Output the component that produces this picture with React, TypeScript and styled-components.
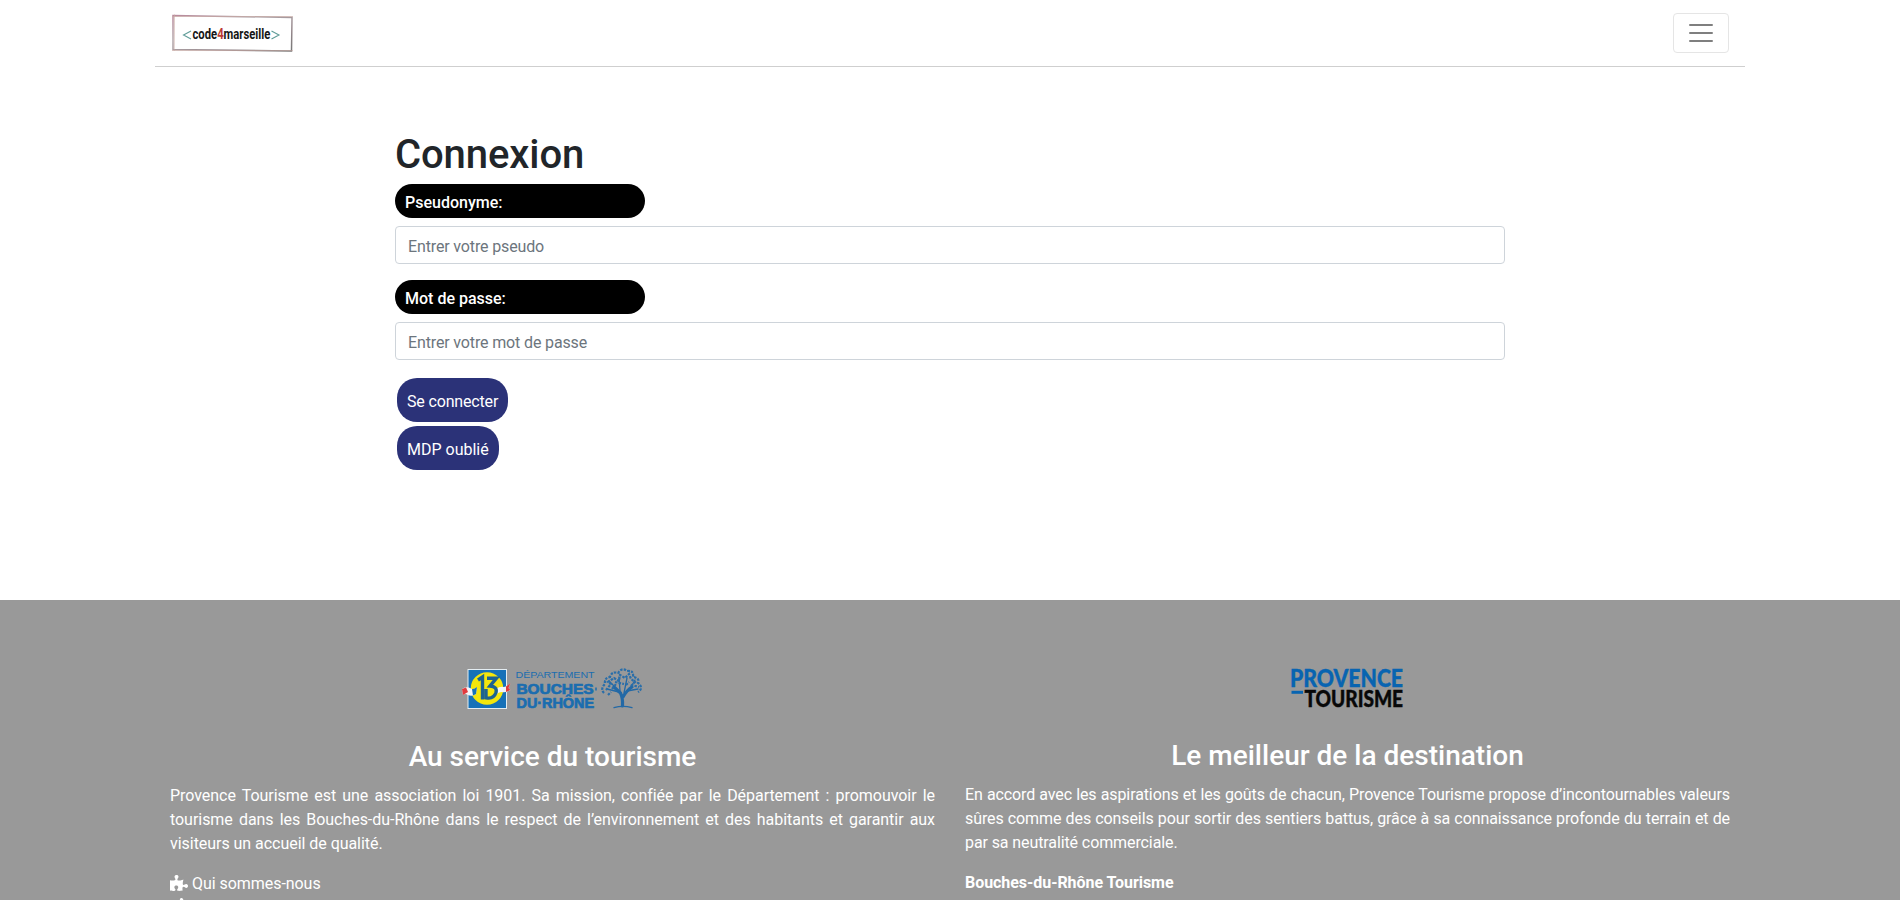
import React from 'react';
import styled, { createGlobalStyle } from 'styled-components';
import { FaPuzzlePiece, FaThumbsUp } from 'react-icons/fa';

const GlobalStyle = createGlobalStyle`
  *, *::before, *::after { box-sizing: border-box; }
  html { overflow: hidden; }
  body {
    margin: 0;
    height: 900px;
    overflow: hidden;
    background: #fff;
    color: #212529;
    font: 400 16px/1.5 Roboto, sans-serif;
  }
  h1, h2, p { margin: 0; }
`;

const Navbar = styled.nav`
  display: flex;
  align-items: center;
  justify-content: space-between;
  width: 1590px;
  height: 67px;
  margin: 0 auto;
  padding: 0 16px;
  border-bottom: 1px solid #cfcfcf;
`;

const Brand = styled.a`
  display: flex;
  width: 124px;
  height: 40px;
`;

const Toggler = styled.button`
  display: flex;
  align-items: center;
  justify-content: center;
  width: 56px;
  height: 40px;
  padding: 0;
  background: transparent;
  border: 1px solid #e5e5e5;
  border-radius: 4px;
`;

const Main = styled.main`
  display: flex;
  flex-direction: column;
  align-items: flex-start;
  width: 1110px;
  height: 533px;
  margin: 0 auto;
  padding-top: 64px;
`;

const Title = styled.h1`
  margin-bottom: 5px;
  font-size: 40px;
  font-weight: 500;
  line-height: 48px;
  letter-spacing: -0.1px;
`;

const Field = styled.div`
  width: 100%;
  margin-bottom: 16px;
`;

const Label = styled.label`
  display: block;
  width: 250px;
  margin-bottom: 8px;
  padding: 7px 10px 3px;
  border-radius: 20px;
  background: #000;
  color: #fff;
  font-weight: 500;
`;

const Input = styled.input`
  display: block;
  width: 100%;
  height: 38px;
  padding: 7px 12px 5px;
  border: 1px solid #ced4da;
  border-radius: 4px;
  background: #fff;
  font: inherit;
  letter-spacing: -0.14px;
  &::placeholder { color: #6c757d; opacity: 1; }
`;

const PillButton = styled.button<{ $tracking?: number }>`
  height: 44px;
  margin: 2px;
  padding: 12px 10px 8px;
  border: 0;
  border-radius: 20px;
  background: #2b3278;
  color: #fff;
  font: inherit;
  letter-spacing: ${(p) => p.$tracking ?? 0}px;
`;

const Footer = styled.footer`
  height: 300px;
  overflow: hidden;
  background: #999;
  color: #fff;
`;

const FooterGrid = styled.div`
  display: grid;
  grid-template-columns: 1fr 1fr;
  gap: 30px;
  width: 1560px;
  margin: 0 auto;
`;

const Column = styled.section<{ $top: number }>`
  display: flex;
  flex-direction: column;
  padding-top: ${(p) => p.$top}px;
  letter-spacing: -0.05px;
`;

const LogoSlot = styled.div<{ $top: number }>`
  display: flex;
  justify-content: center;
  height: 64px;
  margin-bottom: 16px;
  padding-top: ${(p) => p.$top}px;
`;

const Heading = styled.h2`
  margin-bottom: 10px;
  font-size: 28px;
  font-weight: 500;
  line-height: 34px;
  letter-spacing: 0;
  text-align: center;
`;

const Paragraph = styled.p<{ $tracking?: number }>`
  margin-bottom: 16px;
  text-align: justify;
  letter-spacing: ${(p) => p.$tracking ?? -0.04}px;
`;

const LinkRow = styled.a`
  display: flex;
  align-items: center;
  gap: 4px;
  height: 24px;
  color: #fff;
`;

const IconBox = styled.span`
  display: flex;
  justify-content: center;
  width: 18px;
  padding-bottom: 2px;
`;

const LogoSvg = styled.svg`
  flex: none;
  overflow: visible;
`;

function BrandLogo() {
  return (
    <LogoSvg width="124" height="40" viewBox="0 0 124 40">
      <defs>
        <linearGradient id="frame" x1="0" y1="0" x2="1" y2="1">
          <stop offset="0" stopColor="#b98a9c" />
          <stop offset=".35" stopColor="#b3a8ac" />
          <stop offset=".7" stopColor="#97898d" />
          <stop offset="1" stopColor="#777" />
        </linearGradient>
      </defs>
      <path d="M2 2.5 L121 4.5 L120.5 38 L2 36.5 Z" fill="none" stroke="url(#frame)" strokeWidth="1.5" />
      <path d="M1 3.5 L122 3.5 M3.5 1.5 L3.2 38 M1 37.5 L122 37.6" fill="none" stroke="#c9aaa2" strokeWidth=".6" />
      <path d="M20 18 L12.5 22 L20 26 M100.5 18 L108 22 L100.5 26" fill="none" stroke="#5f9c98" strokeWidth="1.1" />
      <text
        transform="translate(21.5 26) scale(.68 1)"
        fontFamily="Roboto, sans-serif"
        fontWeight="700"
        fontSize="15.5"
        fill="#161616"
        textLength="114.5"
        lengthAdjust="spacingAndGlyphs"
      >
        code<tspan fill="#bd3a35">4</tspan>marseille
      </text>
    </LogoSvg>
  );
}

function DepartmentLogo() {
  return (
    <LogoSvg width="184" height="46" viewBox="0 0 184 46">
      <rect x="7" y="5.5" width="38.5" height="39" fill="#1671b8" stroke="#e4edf2" strokeWidth="1" />
      <circle cx="26" cy="24.5" r="16.3" fill="#f4e60c" />
      <path d="M1 25 Q5 22 10 24.5 Q13 26 16 23 L15 30 Q11 33 7 31 Q4 29 2 31 Z" fill="#f3f5f7" />
      <path d="M1 25 L5 23.5 L7 28 L2 31 Z" fill="#e23a3d" />
      <path d="M11 25 Q13 25.500 16 23 L15 30 L12 31.500 Z" fill="#1671b8" />
      <path d="M35 25 Q39 22 43 23 Q46 23 49.5 19.5 L47.5 24 L49.5 26 Q45 29 41 28 Q37 28 35 31 Z" fill="#f3f5f7" />
      <path d="M45 22.5 L49.5 19.5 L47.5 24 L49.5 26 L45 28 Z" fill="#e23a3d" />
      <path d="M17 16 L21.5 13 V35.500 M26 14.200 H35.500 L29 22 Q36.500 22.500 35 28.500 Q32.500 35.500 25 33.800 V25" fill="none" stroke="#1d6390" strokeWidth="3.4" />
      <g fill="#1b6daf">
        <text x="54.5" y="13.5" fontFamily="Liberation Sans, sans-serif" fontSize="8.6" textLength="79" lengthAdjust="spacingAndGlyphs">DÉPARTEMENT</text>
        <g fontFamily="Liberation Sans, sans-serif" fontWeight="700" fontSize="14" stroke="#1b6daf" strokeWidth=".7">
          <text x="55.5" y="29.5" textLength="77" lengthAdjust="spacingAndGlyphs">BOUCHES</text>
          <text x="55.5" y="43.5" textLength="77.5" lengthAdjust="spacingAndGlyphs">DU·RHÔNE</text>
        </g>
      </g>
      <path d="M135 23.5v3" stroke="#1b6daf" strokeWidth="1.5" />
      <g stroke="#2369a6" fill="none" strokeLinecap="round">
        <path d="M161.5 42 Q162 34 159.5 29 L153 23 M162 33 Q166 26 171 23" strokeWidth="3.2" />
        <path d="M153 43.7 Q162 41 171 43.7 M158 28 L146 25 M159 27 L158 13 M163 29 L166 14 M166 27 L177 25 M153 22 L148 17 M170 23 L174 16" strokeWidth="1.3" />
      </g>
      <g fill="none" stroke="#2a6ea9" strokeWidth="2.2" strokeDasharray="2.5 1.2">
        <path d="M143 29 Q139 25 144 20 Q143 14 149 13 Q151 7 157 9 Q161 3 166 7 Q173 6 172 13 Q179 14 177 19 Q183 24 177 28" />
        <path d="M145 26 L150 20 L147 18 L153 14 L158 17 L159 11 L164 14 L168 10 L170 15 L174 18 L171 21 L178 23 M151 25 L155 20 M165 21 L168 18 M147 31 L150 28 M154 18 L163 20" />
      </g>
    </LogoSvg>
  );
}

function ProvenceLogo() {
  return (
    <LogoSvg width="114" height="46" viewBox="0 0 114 46">
      <g fontFamily="Lato, sans-serif" fontWeight="900">
        <text x="-1" y="22.7" fontSize="25.5" fill="#0864b1" stroke="#0864b1" strokeWidth=".4" textLength="113" lengthAdjust="spacingAndGlyphs">PROVENCE</text>
        <text x="13.5" y="43" fontSize="23" fill="#080808" stroke="#080808" strokeWidth=".4" textLength="98.5" lengthAdjust="spacingAndGlyphs">TOURISME</text>
      </g>
      <path d="M.5 28.3H12" stroke="#0864b1" strokeWidth="3" />
    </LogoSvg>
  );
}

export default function App() {
  return (
    <>
      <GlobalStyle />
      <Navbar>
        <Brand aria-label="code4marseille"><BrandLogo /></Brand>
        <Toggler aria-label="Menu">
          <svg width="30" height="30" viewBox="0 0 30 30">
            <path d="M4 7h22M4 15h22M4 23h22" stroke="#7f7f7f" strokeWidth="2" strokeLinecap="round" />
          </svg>
        </Toggler>
      </Navbar>
      <Main>
        <Title>Connexion</Title>
        <Field>
          <Label htmlFor="pseudo">Pseudonyme:</Label>
          <Input id="pseudo" placeholder="Entrer votre pseudo" />
        </Field>
        <Field>
          <Label htmlFor="password">Mot de passe:</Label>
          <Input id="password" type="password" placeholder="Entrer votre mot de passe" />
        </Field>
        <PillButton $tracking={-0.16}>Se connecter</PillButton>
        <PillButton>MDP oublié</PillButton>
      </Main>
      <Footer>
        <FooterGrid>
          <Column $top={60}>
            <LogoSlot $top={4}><DepartmentLogo /></LogoSlot>
            <Heading>Au service du tourisme</Heading>
            <Paragraph>
              Provence Tourisme est une association loi 1901. Sa mission, confiée par le Département :
              promouvoir le tourisme dans les Bouches-du-Rhône dans le respect de l’environnement et des
              habitants et garantir aux visiteurs un accueil de qualité.
            </Paragraph>
            <LinkRow><IconBox><FaPuzzlePiece size={18} /></IconBox>Qui sommes-nous</LinkRow>
            <LinkRow><IconBox><FaThumbsUp size={18} /></IconBox></LinkRow>
          </Column>
          <Column $top={59}>
            <LogoSlot $top={5}><ProvenceLogo /></LogoSlot>
            <Heading>Le meilleur de la destination</Heading>
            <Paragraph $tracking={-0.1}>
              En accord avec les aspirations et les goûts de chacun, Provence Tourisme propose
              d’incontournables valeurs sûres comme des conseils pour sortir des sentiers battus, grâce à
              sa connaissance profonde du terrain et de par sa neutralité commerciale.
            </Paragraph>
            <strong>Bouches-du-Rhône Tourisme</strong>
          </Column>
        </FooterGrid>
      </Footer>
    </>
  );
}
